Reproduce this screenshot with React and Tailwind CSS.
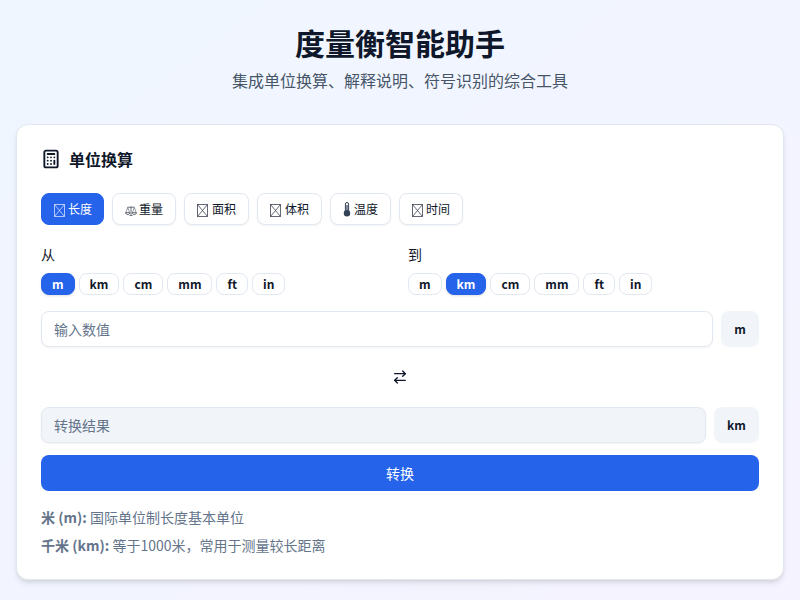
import React from "react";
import { Calculator, ArrowRightLeft } from "lucide-react";

function Tofu({ wide }) {
  return (
    <svg width="11" height="13" viewBox="0 0 11 13" fill="none" stroke="currentColor" strokeWidth="0.8" className={wide ? "inline-block align-[-2.5px] mr-1 opacity-80" : "inline-block align-[-2.5px] mr-[3px] opacity-80"}>
      <rect x="0.5" y="0.5" width="10" height="12" />
      <path d="M0.5 0.5L10.5 12.5M10.5 0.5L0.5 12.5" />
    </svg>
  );
}

function Scale() {
  return (
    <svg width="12" height="11" viewBox="0 0 12 11" fill="none" stroke="currentColor" className="inline-block align-[-2px] mr-[2px] opacity-85">
      <path d="M6 1.5V10M4.5 10.5H7.5M2.5 2.2H9.5" strokeWidth="0.7" />
      <path d="M2.7 2.5L0.8 7.5M2.7 2.5L4.6 7.5M9.3 2.5L7.4 7.5M9.3 2.5L11.2 7.5" strokeWidth="0.5" />
      <path d="M0.6 7.7C0.9 10.2 4.5 10.2 4.8 7.7ZM7.2 7.7C7.5 10.2 11.1 10.2 11.4 7.7Z" strokeWidth="0.8" />
    </svg>
  );
}

function Thermo() {
  return (
    <svg width="8" height="15" viewBox="0 0 8 15" className="inline-block align-[-3.5px] mr-[3px] text-[#334155]" fill="none" stroke="currentColor">
      <rect x="2.4" y="0.5" width="3.2" height="10" rx="1.6" strokeWidth="1" />
      <path d="M4 3V10" strokeWidth="1.2" />
      <circle cx="4" cy="11.3" r="3.2" fill="currentColor" strokeWidth="0" />
    </svg>
  );
}

const cats = [
  { icon: <Tofu />, name: "长度", on: true },
  { icon: <Scale />, name: "重量" },
  { icon: <Tofu wide />, name: "面积" },
  { icon: <Tofu wide />, name: "体积" },
  { icon: <Thermo />, name: "温度" },
  { icon: <Tofu />, name: "时间" },
];
const units = ["m", "km", "cm", "mm", "ft", "in"];

function Units({ active }) {
  return (
    <div className="flex gap-1">
      {units.map((u) => (
        <button
          key={u}
          className={
            u === active
              ? "h-[22px] px-2.5 rounded-lg text-xs font-semibold leading-none border border-[#2563eb] bg-[#2563eb] text-white shadow-sm"
              : "h-[22px] px-2.5 rounded-lg text-xs font-semibold leading-none border border-[#e2e8f0] bg-white text-[#0f172a]"
          }
        >
          {u}
        </button>
      ))}
    </div>
  );
}

export default function App() {
  return (
    <div className="w-[800px] h-[600px] overflow-hidden bg-gradient-to-br from-[#eff6ff] to-[#f5f3ff] font-['Noto_Sans_CJK_SC',sans-serif] px-4 pt-6">
      <div className="text-center mb-8">
        <h1 className="text-[30px] leading-9 font-bold text-[#0f172a] mb-2">度量衡智能助手</h1>
        <p className="text-base leading-6 text-[#475569]">集成单位换算、解释说明、符号识别的综合工具</p>
      </div>
      <div className="bg-white rounded-xl border border-[#e2e8f0] shadow-md px-6 pt-6 pb-5">
        <div className="flex items-center gap-2 mb-6 h-5">
          <Calculator size={20} strokeWidth={2.25} className="text-[#0f172a]" />
          <h2 className="text-base font-semibold text-[#0f172a]">单位换算</h2>
        </div>
        <div className="flex gap-2 mb-[19px]">
          {cats.map(({ icon, name, on }) => (
            <button
              key={name}
              className={
                on
                  ? "h-8 pl-3 pr-[11px] rounded-lg text-xs border border-[#2563eb] bg-[#2563eb] text-white"
                  : "h-8 px-3 rounded-lg text-xs border border-[#e2e8f0] bg-white text-[#0f172a] shadow-xs"
              }
            >
              {icon}{name}
            </button>
          ))}
        </div>
        <div className="grid grid-cols-2 gap-4 mb-4">
          <div>
            <div className="text-sm leading-5 text-[#0f172a] mb-[9px]">从</div>
            <Units active="m" />
          </div>
          <div>
            <div className="text-sm leading-5 text-[#0f172a] mb-[9px]">到</div>
            <Units active="km" />
          </div>
        </div>
        <div className="flex gap-2">
          <input
            placeholder="输入数值"
            className="flex-1 min-w-0 h-9 px-3 text-sm rounded-lg border border-[#e2e8f0] bg-white shadow-xs placeholder:text-[#64748b]"
          />
          <div className="h-9 w-[38px] flex items-center justify-center rounded-lg bg-[#f1f5f9] text-xs font-semibold text-[#0f172a]">m</div>
        </div>
        <div className="flex justify-center items-center h-9 my-3">
          <ArrowRightLeft size={16} className="text-[#0f172a]" />
        </div>
        <div className="flex gap-2 mb-3">
          <input
            readOnly
            placeholder="转换结果"
            className="flex-1 min-w-0 h-9 px-3 text-sm rounded-lg border border-[#e2e8f0] bg-[#f1f5f9] shadow-xs placeholder:text-[#64748b]"
          />
          <div className="h-9 w-[45px] flex items-center justify-center rounded-lg bg-[#f1f5f9] text-xs font-semibold text-[#0f172a]">km</div>
        </div>
        <button className="w-full h-9 rounded-lg bg-[#2563eb] text-white text-sm mb-3">转换</button>
        <div className="text-sm text-[#64748b] leading-7">
          <p><span className="font-semibold">米 (m):</span> 国际单位制长度基本单位</p>
          <p><span className="font-semibold">千米 (km):</span> 等于1000米，常用于测量较长距离</p>
        </div>
      </div>
    </div>
  );
}
